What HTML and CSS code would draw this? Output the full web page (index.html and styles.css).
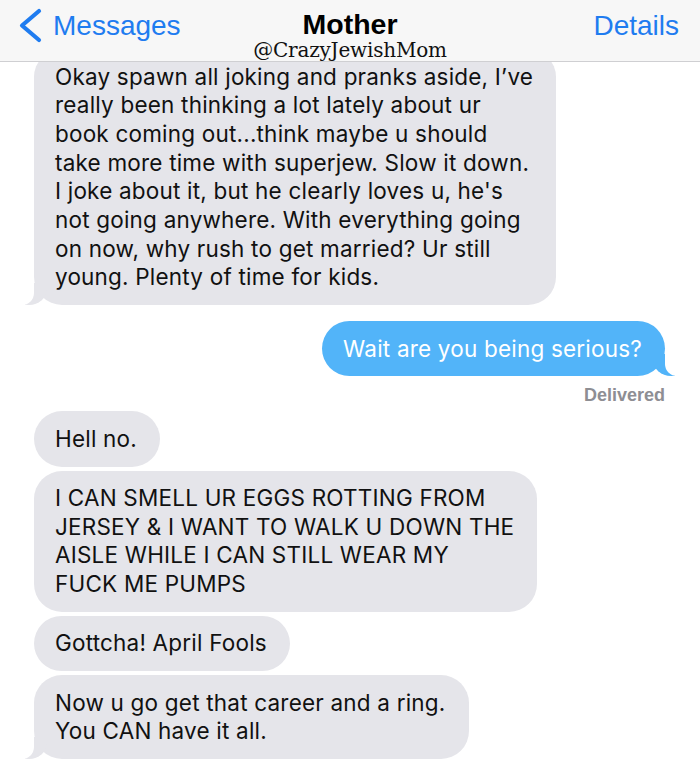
FILE: index.html
```html
<!DOCTYPE html>
<html lang="en">
<head>
    <meta charset="UTF-8">
    <meta name="viewport" content="width=device-width, initial-scale=1.0">
    <title>Mother</title>
    <link rel="stylesheet" href="styles.css">
</head>
<body>
    <header class="nav">
        <div class="nav-back">
            <svg class="chevron" width="24" height="36" viewBox="0 0 24 36">
                <polyline points="21,3 4,17.5 21,32" fill="none" stroke="#1f7cf0" stroke-width="4.2" stroke-linecap="round" stroke-linejoin="round"/>
            </svg>
            <span>Messages</span>
        </div>
        <div class="nav-title">
            <div class="name">Mother</div>
            <div class="handle">@CrazyJewishMom</div>
        </div>
        <div class="nav-details">Details</div>
    </header>

    <main class="thread">
        <div class="bubble them tail">Okay spawn all joking and pranks aside, I’ve<br>really been thinking a lot lately about ur<br>book coming out...think maybe u should<br>take more time with superjew. Slow it down.<br>I joke about it, but he clearly loves u, he's<br>not going anywhere. With everything going<br>on now, why rush to get married? Ur still<br>young. Plenty of time for kids.</div>

        <div class="bubble me tail">Wait are you being serious?</div>
        <div class="status">Delivered</div>

        <div class="bubble them">Hell no.</div>
        <div class="bubble them">I CAN SMELL UR EGGS ROTTING FROM<br>JERSEY &amp; I WANT TO WALK U DOWN THE<br>AISLE WHILE I CAN STILL WEAR MY<br>FUCK ME PUMPS</div>
        <div class="bubble them">Gottcha! April Fools</div>
        <div class="bubble them tail">Now u go get that career and a ring.<br>You CAN have it all.</div>
    </main>
</body>
</html>
```

FILE: styles.css
```css
body {
    margin: 0;
    background: #fff;
    font-family: 'Liberation Sans', Arial, sans-serif;
    overflow: hidden;
}

/* top bar sits over the thread, like the iOS translucent bar */
.nav {
    position: fixed;
    top: 0;
    left: 0;
    right: 0;
    z-index: 5;
    height: 61px;
    background: #f7f7f7;
    border-bottom: 1px solid #cfcfd2;
    display: grid;
    grid-template-columns: 1fr auto 1fr;
    align-items: start;
}
.nav-back {
    display: flex;
    align-items: flex-start;
    padding: 7px 0 0 18px;
    color: #1f7cf0;
    font-size: 28px;
    line-height: 36px;
}
.nav-back span {
    margin-left: 11px;
    margin-top: 1px;
}
.chevron {
    display: block;
    margin-top: 1px;
}
.nav-title {
    text-align: center;
    padding-top: 10px;
}
.nav-title .name {
    font-size: 28.5px;
    font-weight: bold;
    line-height: 29px;
    color: #000;
}
.nav-title .handle {
    font-family: 'DejaVu Serif', 'Liberation Serif', serif;
    font-size: 20px;
    line-height: 22px;
    letter-spacing: -0.2px;
    color: #111;
}
.nav-details {
    justify-self: end;
    padding: 8px 21px 0 0;
    color: #1f7cf0;
    font-size: 28px;
    line-height: 36px;
}

.thread {
    display: flex;
    flex-direction: column;
    align-items: flex-start;
    gap: 4px;
    padding: 49px 35px 0 34px;
}
.bubble {
    position: relative;
    padding: 13.5px 23px 13px 21px;
    border-radius: 28px;
    font-family: Inter, 'Liberation Sans', sans-serif;
    font-size: 22.5px;
    line-height: 28.7px;
    letter-spacing: 0.2px;
    white-space: nowrap;
}
.them {
    background: #e5e5ea;
    color: #111;
}
.me {
    align-self: flex-end;
    background: #52b4f9;
    color: #fff;
    margin-top: 12px;
}

/* bubble tails */
.tail::before,
.tail::after {
    content: '';
    position: absolute;
    bottom: 0;
    height: 22px;
}
.them.tail::before {
    left: -9px;
    width: 22px;
    background: #e5e5ea;
    border-bottom-right-radius: 18px 16px;
}
.them.tail::after {
    left: -28px;
    width: 28px;
    background: #fff;
    border-bottom-right-radius: 12px;
}
.me.tail::before {
    right: -10px;
    width: 22px;
    background: #52b4f9;
    border-bottom-left-radius: 18px 16px;
}
.me.tail::after {
    right: -29px;
    width: 29px;
    background: #fff;
    border-bottom-left-radius: 12px;
}

.status {
    align-self: flex-end;
    font-size: 18px;
    font-weight: bold;
    line-height: 22px;
    color: #8e8e93;
    margin: 4px 0 1px;
}
```
